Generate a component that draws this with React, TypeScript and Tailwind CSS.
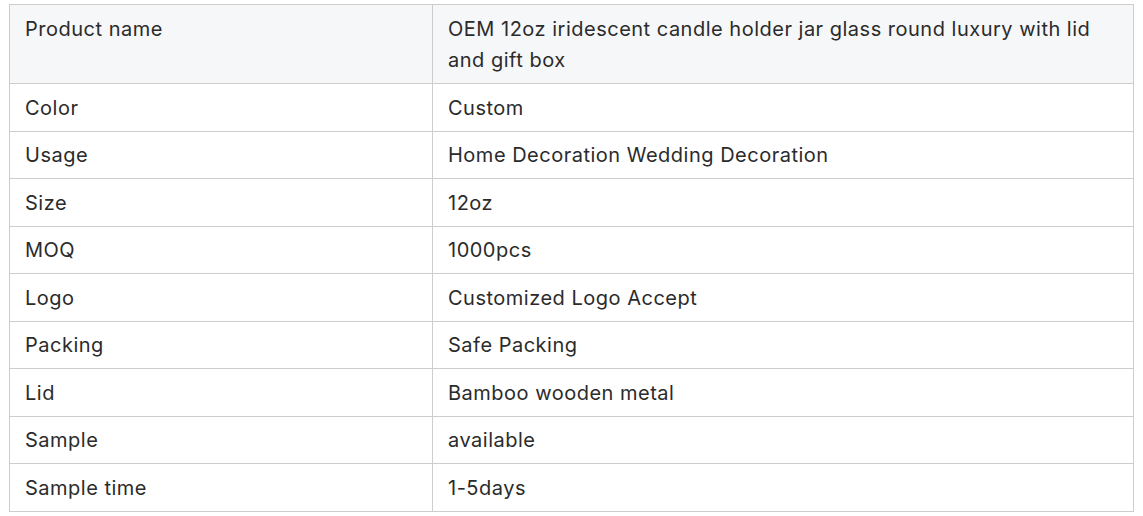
const rows: [string, string][] = [
  ["Product name", "OEM 12oz iridescent candle holder jar glass round luxury with lid and gift box"],
  ["Color", "Custom"],
  ["Usage", "Home Decoration Wedding Decoration"],
  ["Size", "12oz"],
  ["MOQ", "1000pcs"],
  ["Logo", "Customized Logo Accept"],
  ["Packing", "Safe Packing"],
  ["Lid", "Bamboo wooden metal"],
  ["Sample", "available"],
  ["Sample time", "1-5days"],
]

export default function App() {
  return (
    <div className="bg-white pl-[9px] pr-[9px] pt-1" style={{ fontFamily: "Inter, 'Noto Sans', sans-serif" }}>
      <table className="w-[1125px] border-collapse text-[20px] leading-[30.5px] tracking-[0.5px] text-[#2b2b2b]">
        <tbody>
          {rows.map(([k, v], i) => {
            const pad = i === 0 ? "pt-[9px] pb-2" : "pt-[8.5px] pb-[7.5px]"
            return (
              <tr key={k} className={i === 0 ? "bg-[#f6f7f9]" : "bg-white"}>
                <td className={`w-[423px] border border-[#cdcdcd] px-[15px] align-top ${pad}`}>{k}</td>
                <td className={`border border-[#cdcdcd] px-[15px] align-top ${pad}`}>{v}</td>
              </tr>
            )
          })}
        </tbody>
      </table>
    </div>
  )
}
